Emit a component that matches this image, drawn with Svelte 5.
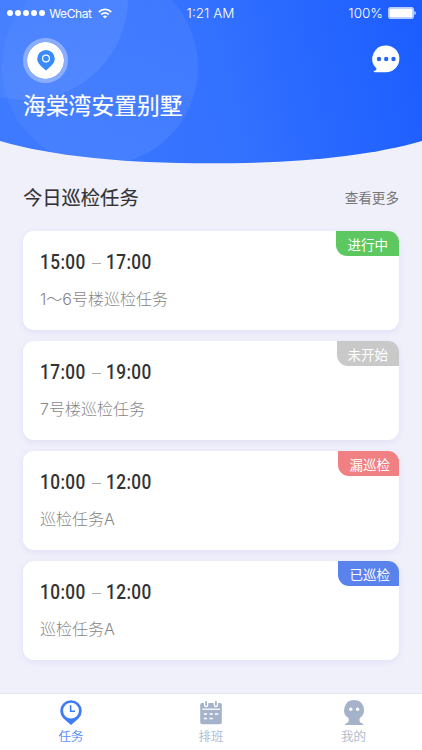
<script>
  const tasks = [
    { from: '15:00', to: '17:00', name: '1～6号楼巡检任务', status: '进行中', kind: 'running' },
    { from: '17:00', to: '19:00', name: '7号楼巡检任务', status: '未开始', kind: 'pending' },
    { from: '10:00', to: '12:00', name: '巡检任务A', status: '漏巡检', kind: 'missed' },
    { from: '10:00', to: '12:00', name: '巡检任务A', status: '已巡检', kind: 'done' }
  ];
</script>

<div class="screen">
  <header>
    <svg class="backdrop" width="422" height="164" viewBox="0 0 422 164" aria-hidden="true">
      <defs>
        <linearGradient id="blue" x1="0" y1="0.1" x2="1" y2="0">
          <stop offset="0" stop-color="#3d7aff" />
          <stop offset="0.48" stop-color="#3371ff" />
          <stop offset="1" stop-color="#1b5cff" />
        </linearGradient>
        <linearGradient id="disc" x1="0" y1="0" x2="1" y2="1">
          <stop offset="0" stop-color="#fff" stop-opacity="0.02" />
          <stop offset="1" stop-color="#fff" stop-opacity="0.08" />
        </linearGradient>
        <clipPath id="dome"><path d="M0 0H422V141C370 156 300 163.3 211 163.3S52 156 0 141Z" /></clipPath>
      </defs>
      <g clip-path="url(#dome)">
        <rect width="422" height="164" fill="url(#blue)" />
        <circle cx="100" cy="67" r="98" fill="url(#disc)" />
        <circle cx="26" cy="-2" r="102" fill="url(#disc)" />
      </g>
    </svg>

    <div class="statusbar">
      <div class="carrier">
        <span class="dots"><i></i><i></i><i></i><i></i><i></i></span>
        <span class="wechat">WeChat</span>
        <svg width="14" height="11" viewBox="0 0 14 11" fill="none" stroke="#fff" stroke-width="1.8">
          <path d="M.8 4C4.3.6 9.7.6 13.2 4M3.2 6.5c2.2-2 5.4-2 7.6 0" />
          <path d="M4.8 8.3c1.3-1.1 3.1-1.1 4.4 0L7 10.6Z" fill="#fff" stroke="none" />
        </svg>
      </div>
      <span class="clock">1:21 AM</span>
      <div class="power">
        <span>100%</span>
        <svg width="28" height="12" viewBox="0 0 28 12">
          <rect x=".5" y=".5" width="25" height="11" rx="1.5" fill="#fff" fill-opacity=".45" stroke="#fff" stroke-opacity=".6" />
          <rect x="1.5" y="1.5" width="23" height="9" rx=".7" fill="#fff" />
          <path d="M26.5 4c1.6.4 1.6 3.6 0 4Z" fill="#fff" />
        </svg>
      </div>
    </div>

    <div class="tools">
      <div class="place">
        <svg width="18" height="21" viewBox="0 0 18 21">
          <path d="M9 20.6C6.2 17.8.2 14 .2 8.8a8.8 8.8 0 0 1 17.6 0C17.8 14 11.8 17.8 9 20.6Z" fill="#398bfb" />
          <circle cx="9" cy="8.5" r="3.4" fill="none" stroke="#fff" stroke-width="1.2" />
        </svg>
      </div>
      <svg class="chat" width="28" height="28" viewBox="0 0 28 28">
        <path d="M14 .4a13.4 13.4 0 0 1 0 26.8H3.2c-1.8 0-2.2-.8-.9-1.3 1.7-.5 2.2-1.2 2.2-2.4A13.4 13.4 0 0 1 14 .4Z" fill="#fff" />
        <g fill="#2666ee"><circle cx="7" cy="14" r="2.2" /><circle cx="14.2" cy="14" r="2.2" /><circle cx="21.5" cy="14" r="2.2" /></g>
      </svg>
    </div>
    <h1>海棠湾安置别墅</h1>
  </header>

  <main>
    <div class="heading">
      <h2>今日巡检任务</h2>
      <span class="more">查看更多</span>
    </div>
    <div class="list">
      {#each tasks as task}
        <article>
          <div class="time"><b>{task.from}</b><i></i><b>{task.to}</b></div>
          <p>{task.name}</p>
          <span class="badge {task.kind}">{task.status}</span>
        </article>
      {/each}
    </div>
  </main>

  <nav>
    <div class="tab active">
      <svg width="24" height="28" viewBox="0 0 24 28">
        <path d="M12 26 4.2 19.2A10.7 10.7 0 1 1 19.8 19.2Z" fill="currentColor" />
        <circle cx="12" cy="11.7" r="7.9" fill="#fff" />
        <path d="M11.6 6.3v6H16" fill="none" stroke="currentColor" stroke-width="1.6" />
      </svg>
      <span>任务</span>
    </div>
    <div class="tab">
      <svg width="24" height="28" viewBox="0 0 24 28">
        <path d="M3 4h1.9v2a2.2 2.2 0 0 0 4.4 0V4h5.400v2a2.200 2.200 0 0 0 4.400 0V4H21a1.800 1.800 0 0 1 1.800 1.800V23.200a2 2 0 0 1-2 2H3.200a2 2 0 0 1-2-2V5.800A1.800 1.800 0 0 1 3 4Z" fill="currentColor" />
        <path d="M7.100 3v3M16.900 3v3" stroke="currentColor" stroke-width="1.800" stroke-linecap="round" />
        <path d="M3.300 10.200h17.600" stroke="#fff" stroke-width="1.300" />
        <path d="M4.800 15h3.300m2.400 0h3.300m2.200 0h3.300M4.800 19.500h3.300m2.400 0h3.300" stroke="#fff" stroke-width="1.600" />
      </svg>
      <span>排班</span>
    </div>
    <div class="tab mine">
      <svg width="24" height="28" viewBox="0 0 24 28">
        <path d="M12 1a10 10 0 0 1 5.600 18.300c-.7 3 .5 4.500 2.600 5.100.9.300 1.200.5 1.200 1.600H3c0-1.100.3-1.300 1.200-1.600 2.100-.6 3.100-2.100 2.400-5.100A10 10 0 0 1 12 1Z" fill="currentColor" />
        <circle cx="8.800" cy="10.200" r="1.700" fill="#fff" /><circle cx="15.600" cy="10.200" r="1.700" fill="#fff" />
      </svg>
      <span>我的</span>
    </div>
  </nav>
</div>

<style>
  :global(body) { margin: 0; }
  .screen {
    box-sizing: border-box;
    width: 422px;
    height: 750px;
    display: flex;
    flex-direction: column;
    overflow: hidden;
    background: #f0f0fb;
    font-family: "Noto Sans CJK SC", sans-serif;
  }
  h1, h2, p { margin: 0; font-weight: 400; }
  svg { display: block; flex: none; }
  header { position: relative; height: 164px; flex: none; color: #fff; }
  .backdrop { position: absolute; inset: 0; }
  .statusbar {
    position: relative;
    height: 25px;
    display: grid;
    grid-template-columns: 1fr auto 1fr;
    align-items: center;
    padding: 0 6px 0 7px;
    font: 300 13px/25px Inter, sans-serif;
  }
  .carrier, .power { display: flex; align-items: center; height: 24px; }
  .dots { display: flex; gap: 1.7px; }
  .dots i { width: 6.3px; height: 6.3px; border-radius: 50%; background: #fff; }
  .wechat { margin: 0 6px 0 4px; font-size: 12px; letter-spacing: -.4px; font-weight: 400; }
  .clock { font-size: 13.5px; padding-top: 1px; margin-right: 2px; }
  .power { justify-content: flex-end; gap: 5px; }
  .power span { font-size: 13.5px; padding-top: 1px; }
  .tools { position: relative; display: flex; justify-content: space-between; padding: 13px 22px 0 23px; }
  .place {
    width: 37px;
    height: 37px;
    border: 4px solid #8aadff;
    border-radius: 50%;
    background: #fff;
    background-clip: padding-box;
    display: flex;
    align-items: center;
    justify-content: center;
  }
  .chat { margin-top: 7px; }
  h1 { position: relative; margin: 5px 0 0 23px; font-size: 22.8px; line-height: 33px; -webkit-text-stroke: .15px #fff; }
  main { padding: 0 23px; height: 529px; flex: none; }
  .heading { height: 67px; display: flex; justify-content: space-between; align-items: center; }
  h2 { color: #333; font-size: 19.3px; line-height: 30px; padding-bottom: 2px; -webkit-text-stroke: .15px #333; }
  .more { color: #777; font-size: 13.6px; padding: 0 0 2px; line-height: 20px; }
  .list { display: flex; flex-direction: column; gap: 11px; }
  article {
    position: relative;
    box-sizing: border-box;
    height: 99px;
    padding: 17px 17px 0;
    border-radius: 11px;
    background: #fff;
    box-shadow: 0 2px 6px rgba(105, 105, 225, .12);
  }
  .time { display: flex; align-items: center; height: 29px; color: #333; }
  .time b {
    width: 45px;
    font: 500 20.5px/29px Roboto, sans-serif;
    letter-spacing: .5px;
    transform: scaleX(.84);
    transform-origin: left;
    white-space: nowrap;
  }
  .time i { width: 9px; height: 1px; margin: 1px 5px 0 7px; background: #aaa; }
  p { margin-top: 10px; font: 300 16px/24px Inter, "Noto Sans CJK SC", sans-serif; color: #868686; }
  .badge {
    position: absolute;
    top: 0;
    right: 0;
    box-sizing: border-box;
    width: 62px;
    height: 25px;
    padding-right: 11px;
    border-radius: 0 11px 0 11px;
    color: #fff;
    font-size: 13.5px;
    line-height: 26px;
    text-align: right;
  }
  .running { width: 63px; background: #5cc85f; }
  .pending { background: #c9c9c9; }
  .missed { width: 61px; padding-right: 9px; background: #f08082; }
  .done { width: 61px; padding-right: 9px; background: #5a82ed; }
  nav {
    box-sizing: border-box;
    height: 57px;
    flex: none;
    display: grid;
    grid-template-columns: 142px 138px 142px;
    border-top: 1px solid #e5e5f2;
    background: #fff;
  }
  .tab { display: flex; flex-direction: column; align-items: center; padding-top: 5px; color: #a4b2ca; }
  .tab span { margin-top: -1px; font-size: 12.5px; line-height: 20px; font-weight: 300; -webkit-text-stroke: .15px currentColor; }
  .tab.active { color: #3e7bf6; }
  .mine { padding-left: 5px; }
</style>
